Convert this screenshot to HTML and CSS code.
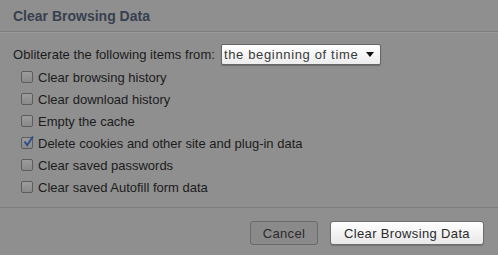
FILE: index.html
```html
<!DOCTYPE html>
<html lang="en">
<head>
  <meta charset="UTF-8">
  <title>Clear Browsing Data</title>
  <link rel="stylesheet" href="styles.css">
</head>
<body>
  <div class="dialog">
    <!-- title -->
    <div class="dialog-header">
      <h1>Clear Browsing Data</h1>
    </div>

    <!-- options -->
    <div class="dialog-body">
      <div class="range-row">
        <span class="range-label">Obliterate the following items from:</span>
        <div class="select">
          <span>the beginning of time</span>
          <span class="arrow"></span>
        </div>
      </div>

      <ul class="options">
        <li><span class="box"></span>Clear browsing history</li>
        <li><span class="box"></span>Clear download history</li>
        <li><span class="box"></span>Empty the cache</li>
        <li>
          <span class="box checked">
            <svg width="13" height="13" viewBox="0 0 13 13"><path d="M2.5 6.5 L5.2 10 L11 1.5" fill="none" stroke="#2f4f8a" stroke-width="2"/></svg>
          </span>Delete cookies and other site and plug-in data
        </li>
        <li><span class="box"></span>Clear saved passwords</li>
        <li><span class="box"></span>Clear saved Autofill form data</li>
      </ul>
    </div>

    <!-- buttons -->
    <div class="dialog-footer">
      <button class="btn cancel">Cancel</button>
      <button class="btn primary">Clear Browsing Data</button>
    </div>
  </div>
</body>
</html>
```

FILE: styles.css
```css
html, body {
  margin: 0;
  padding: 0;
}
body {
  background: #8f8f8f;
  font-family: "Liberation Sans", Arial, sans-serif;
  font-size: 13px;
  color: #1c1c1c;
}
.dialog {
  width: 498px;
  height: 255px;
}

.dialog-header {
  height: 31px;
  border-bottom: 1px solid #7d7d7d;
  box-shadow: 0 1px 0 #999;
}
.dialog-header h1 {
  margin: 0;
  padding: 8px 0 0 13px;
  font-size: 14px;
  font-weight: bold;
  color: #38404f;
  line-height: 16px;
}

.dialog-body {
  padding: 12px 13px 0 13px;
  height: 163px;
  border-bottom: 1px solid #7d7d7d;
}
.range-row {
  display: flex;
  align-items: center;
  gap: 6px;
  height: 21px;
}
.range-label {
  letter-spacing: 0.05px;
}
.select {
  display: flex;
  align-items: center;
  justify-content: space-between;
  padding: 0 6px 0 2px;
  box-sizing: border-box;
  width: 160px;
  height: 21px;
  background: linear-gradient(#ffffff, #ececec);
  border: 1px solid #666;
  border-radius: 2px;
  box-shadow: 0 1px 1px rgba(0,0,0,0.25);
  color: #3a3a3a;
  letter-spacing: 0.65px;
}
.select .arrow {
  width: 0;
  height: 0;
  border-left: 4px solid transparent;
  border-right: 4px solid transparent;
  border-top: 5px solid #111;
}

.options {
  list-style: none;
  margin: 1px 0 0 8px;
  padding: 0;
}
.options li {
  display: flex;
  align-items: center;
  height: 22px;
}
.box {
  position: relative;
  width: 10px;
  height: 10px;
  margin-right: 5px;
  border: 1px solid #5c5c5c;
  border-radius: 2px;
  background: linear-gradient(#9c9c9c, #8a8a8a);
}
.box svg {
  position: absolute;
  left: 0;
  top: -3px;
}

.dialog-footer {
  display: flex;
  justify-content: flex-end;
  gap: 12px;
  padding: 13px 14px 0 0;
}
.btn {
  font-family: "Liberation Sans", Arial, sans-serif;
  font-size: 13px;
  height: 24px;
  border-radius: 3px;
  padding: 0;
  letter-spacing: 0.35px;
}
.cancel {
  width: 68px;
  background: #8a8a8a;
  border: 1px solid #6a6a6a;
  color: #2a2a2a;
}
.primary {
  width: 154px;
  background: linear-gradient(#ffffff, #e8e8e8);
  border: 1px solid #6e6e6e;
  color: #2a2a2a;
  box-shadow: 0 1px 1px rgba(0,0,0,0.2);
}
```
